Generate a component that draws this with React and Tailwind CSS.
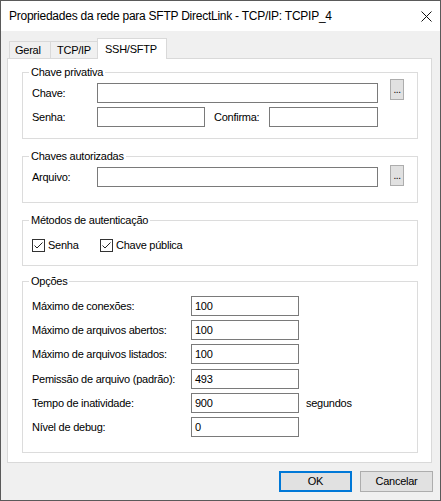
import React from 'react'

const Field = ({ width, value = '', className = '' }) => (
  <div
    className={`h-[20px] border border-[#7a7a7a] bg-white pl-[3px] leading-[18px] text-black ${className}`}
    style={{ width }}
  >
    {value}
  </div>
)

const Browse = () => (
  <div className="w-[14px] h-[21px] border border-[#adadad] bg-[#e1e1e1] flex items-end justify-center pb-[4px] text-[10px] leading-[10px] tracking-[-0.5px]">
    ...
  </div>
)

const Group = ({ title, className = '', children }) => (
  <div className={`mx-[14px] mr-[13px] border border-[#dcdcdc] ${className}`}>
    <span className="block w-fit bg-white ml-[6px] px-[2px] h-[14px] leading-[14px] -mt-[8px] -mb-[6px]">
      {title}
    </span>
    {children}
  </div>
)

const Check = ({ label }) => (
  <div className="flex items-center">
    <div className="w-[13px] h-[13px] border border-[#333333] bg-white">
      <svg width="11" height="11" viewBox="0 0 11 11">
        <path d="M1.5 5.5 L4 8 L9.5 2.5" fill="none" stroke="#222" strokeWidth="1" />
      </svg>
    </div>
    <span className="ml-[3px] leading-[13px]">{label}</span>
  </div>
)

const OptionRow = ({ label, value, extra, className = '' }) => (
  <div className={`flex items-center pl-[9px] ${className}`}>
    <span className="w-[159px] leading-[20px]">{label}</span>
    <Field width={108} value={value} />
    {extra && <span className="ml-[7px]">{extra}</span>}
  </div>
)

export default function App() {
  return (
    <div className="w-[441px] h-[501px] border border-[#5a5a5a] bg-[#f0f0f0] flex flex-col text-black font-['Liberation_Sans',Arial,sans-serif]">
      {/* title bar */}
      <div className="h-[30px] bg-white flex items-center justify-between pl-[8px]">
        <span className="text-[12px] tracking-[-0.25px]">
          Propriedades da rede para SFTP DirectLink - TCP/IP: TCPIP_4
        </span>
        <svg width="11" height="11" viewBox="0 0 11 11" className="mr-[8px]">
          <path d="M0.5 0.5 L10.5 10.5 M10.5 0.5 L0.5 10.5" stroke="#111" strokeWidth="1" />
        </svg>
      </div>

      <div className="text-[11px] tracking-[-0.25px]">
        {/* tabs */}
        <div className="mt-[7px] ml-[8px] flex items-end h-[20px]">
          <div className="w-[41px] h-[17px] border-l border-t border-[#d9d9d9] pl-[5px] leading-[16px]">Geral</div>
          <div className="w-[47px] h-[17px] border-l border-t border-[#d9d9d9] pl-[6px] leading-[16px]">TCP/IP</div>
          <div className="relative z-10 w-[70px] h-[21px] -mb-[1px] border-l border-t border-r border-[#d9d9d9] bg-white pl-[7px] leading-[20px]">
            SSH/SFTP
          </div>
        </div>

        {/* panel */}
        <div className="ml-[6px] w-[425px] h-[405px] border border-[#d9d9d9] bg-white pt-[13px]">
          <Group title="Chave privativa" className="pb-[11px]">
            <div className="flex items-start pl-[9px] mt-[6px]">
              <span className="w-[65px] mt-[4px] leading-[20px]">Chave:</span>
              <Field width={281} className="mt-[4px]" />
              <div className="ml-[12px]">
                <Browse />
              </div>
            </div>
            <div className="flex items-center pl-[9px] mt-[4px]">
              <span className="w-[65px] leading-[20px]">Senha:</span>
              <Field width={108} />
              <span className="ml-[9px] w-[55px]">Confirma:</span>
              <Field width={109} />
            </div>
          </Group>

          <Group title="Chaves autorizadas" className="mt-[17px] pb-[15px]">
            <div className="flex items-start pl-[9px] mt-[8px]">
              <span className="w-[65px] mt-[2px] leading-[20px]">Arquivo:</span>
              <Field width={281} className="mt-[2px]" />
              <div className="ml-[12px]">
                <Browse />
              </div>
            </div>
          </Group>

          <Group title="Métodos de autenticação" className="mt-[17px] pb-[13px]">
            <div className="flex items-center pl-[9px] mt-[18px]">
              <div className="w-[68px]">
                <Check label="Senha" />
              </div>
              <Check label="Chave pública" />
            </div>
          </Group>

          <Group title="Opções" className="mt-[15px] pb-[15px]">
            <OptionRow label="Máximo de conexões:" value="100" className="mt-[14px]" />
            <OptionRow label="Máximo de arquivos abertos:" value="100" className="mt-[4px]" />
            <OptionRow label="Máximo de arquivos listados:" value="100" className="mt-[4px]" />
            <OptionRow label="Pemissão de arquivo (padrão):" value="493" className="mt-[5px]" />
            <OptionRow label="Tempo de inatividade:" value="900" extra="segundos" className="mt-[4px]" />
            <OptionRow label="Nível de debug:" value="0" className="mt-[4px]" />
          </Group>
        </div>

        {/* buttons */}
        <div className="flex justify-end gap-[8px] pr-[7px] mt-[8px]">
          <button className="w-[73px] h-[21px] border-2 border-[#0078d7] bg-[#e1e1e1] leading-[17px]">OK</button>
          <button className="w-[73px] h-[21px] border border-[#adadad] bg-[#e1e1e1] leading-[19px]">Cancelar</button>
        </div>
      </div>
    </div>
  )
}
